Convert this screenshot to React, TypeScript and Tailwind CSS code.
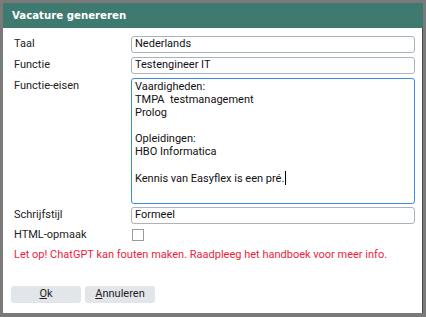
const font = "font-['Roboto','Liberation_Sans',sans-serif]"

function Field({ label, value }: { label: string; value: string }) {
  return (
    <div className="flex h-[17px] items-center">
      <div className="w-[117px] text-[11px] text-[#222]">{label}</div>
      <div className="flex h-[17px] w-[284px] items-center rounded-[3px] border border-[#a9b3bc] bg-white px-[3px] text-[11px] text-[#111]">
        {value}
      </div>
    </div>
  )
}

export default function App() {
  return (
    <div className={`${font} flex h-[317px] w-[426px] flex-col bg-[#7a7a7a] p-[3px] pb-[4px]`}>
      <div className="flex h-[25px] shrink-0 items-center bg-[#3f7a70] px-[9px] font-['DejaVu_Sans',sans-serif] text-[10.2px] font-bold text-white">
        Vacature genereren
      </div>
      <div className="flex flex-1 flex-col border-r border-[#4a4a4a] bg-white pl-[11px] pt-[8px]">
        <div className="flex flex-col gap-[4px]">
          <Field label="Taal" value="Nederlands" />
          <Field label="Functie" value="Testengineer IT" />
          <div className="flex">
            <div className="w-[117px] pt-[1px] text-[11px] leading-[14px] text-[#222]">Functie-eisen</div>
            <div className="h-[126px] w-[284px] rounded-[3px] border border-[#3a8be6] bg-white px-[3px] pt-[1px] text-[11px] leading-[13px] text-[#111]">
              <div>Vaardigheden:</div>
              <div className="whitespace-pre">TMPA  testmanagement</div>
              <div>Prolog</div>
              <div>&nbsp;</div>
              <div>Opleidingen:</div>
              <div>HBO Informatica</div>
              <div>&nbsp;</div>
              <div className="flex items-center">
                Kennis van Easyflex is een pré.<span className="ml-[1px] inline-block h-[14px] w-[1px] bg-black" />
              </div>
            </div>
          </div>
          <div className="-mt-[1px]">
            <Field label="Schrijfstijl" value="Formeel" />
          </div>
          <div className="flex h-[14px] items-center">
            <div className="w-[118px] text-[11px] text-[#222]">HTML-opmaak</div>
            <div className="h-[12px] w-[12px] border border-[#9a9a9a] bg-white" />
          </div>
        </div>
        <div className="mt-[6px] text-[11px] leading-[14px] text-[#ee1e3c]">
          Let op! ChatGPT kan fouten maken. Raadpleeg het handboek voor meer info.
        </div>
        <div className="mt-[24px] flex gap-[4px]">
          <div className="-ml-[3px] flex h-[17px] w-[70px] items-center justify-center rounded-[3px] bg-[#e2e6ea] text-[11px] text-[#222]">
            <span className="underline underline-offset-1">O</span>k
          </div>
          <div className="flex h-[17px] w-[70px] items-center justify-center rounded-[3px] bg-[#e2e6ea] text-[11px] text-[#222]">
            <span className="underline underline-offset-1">A</span>nnuleren
          </div>
        </div>
      </div>
    </div>
  )
}
